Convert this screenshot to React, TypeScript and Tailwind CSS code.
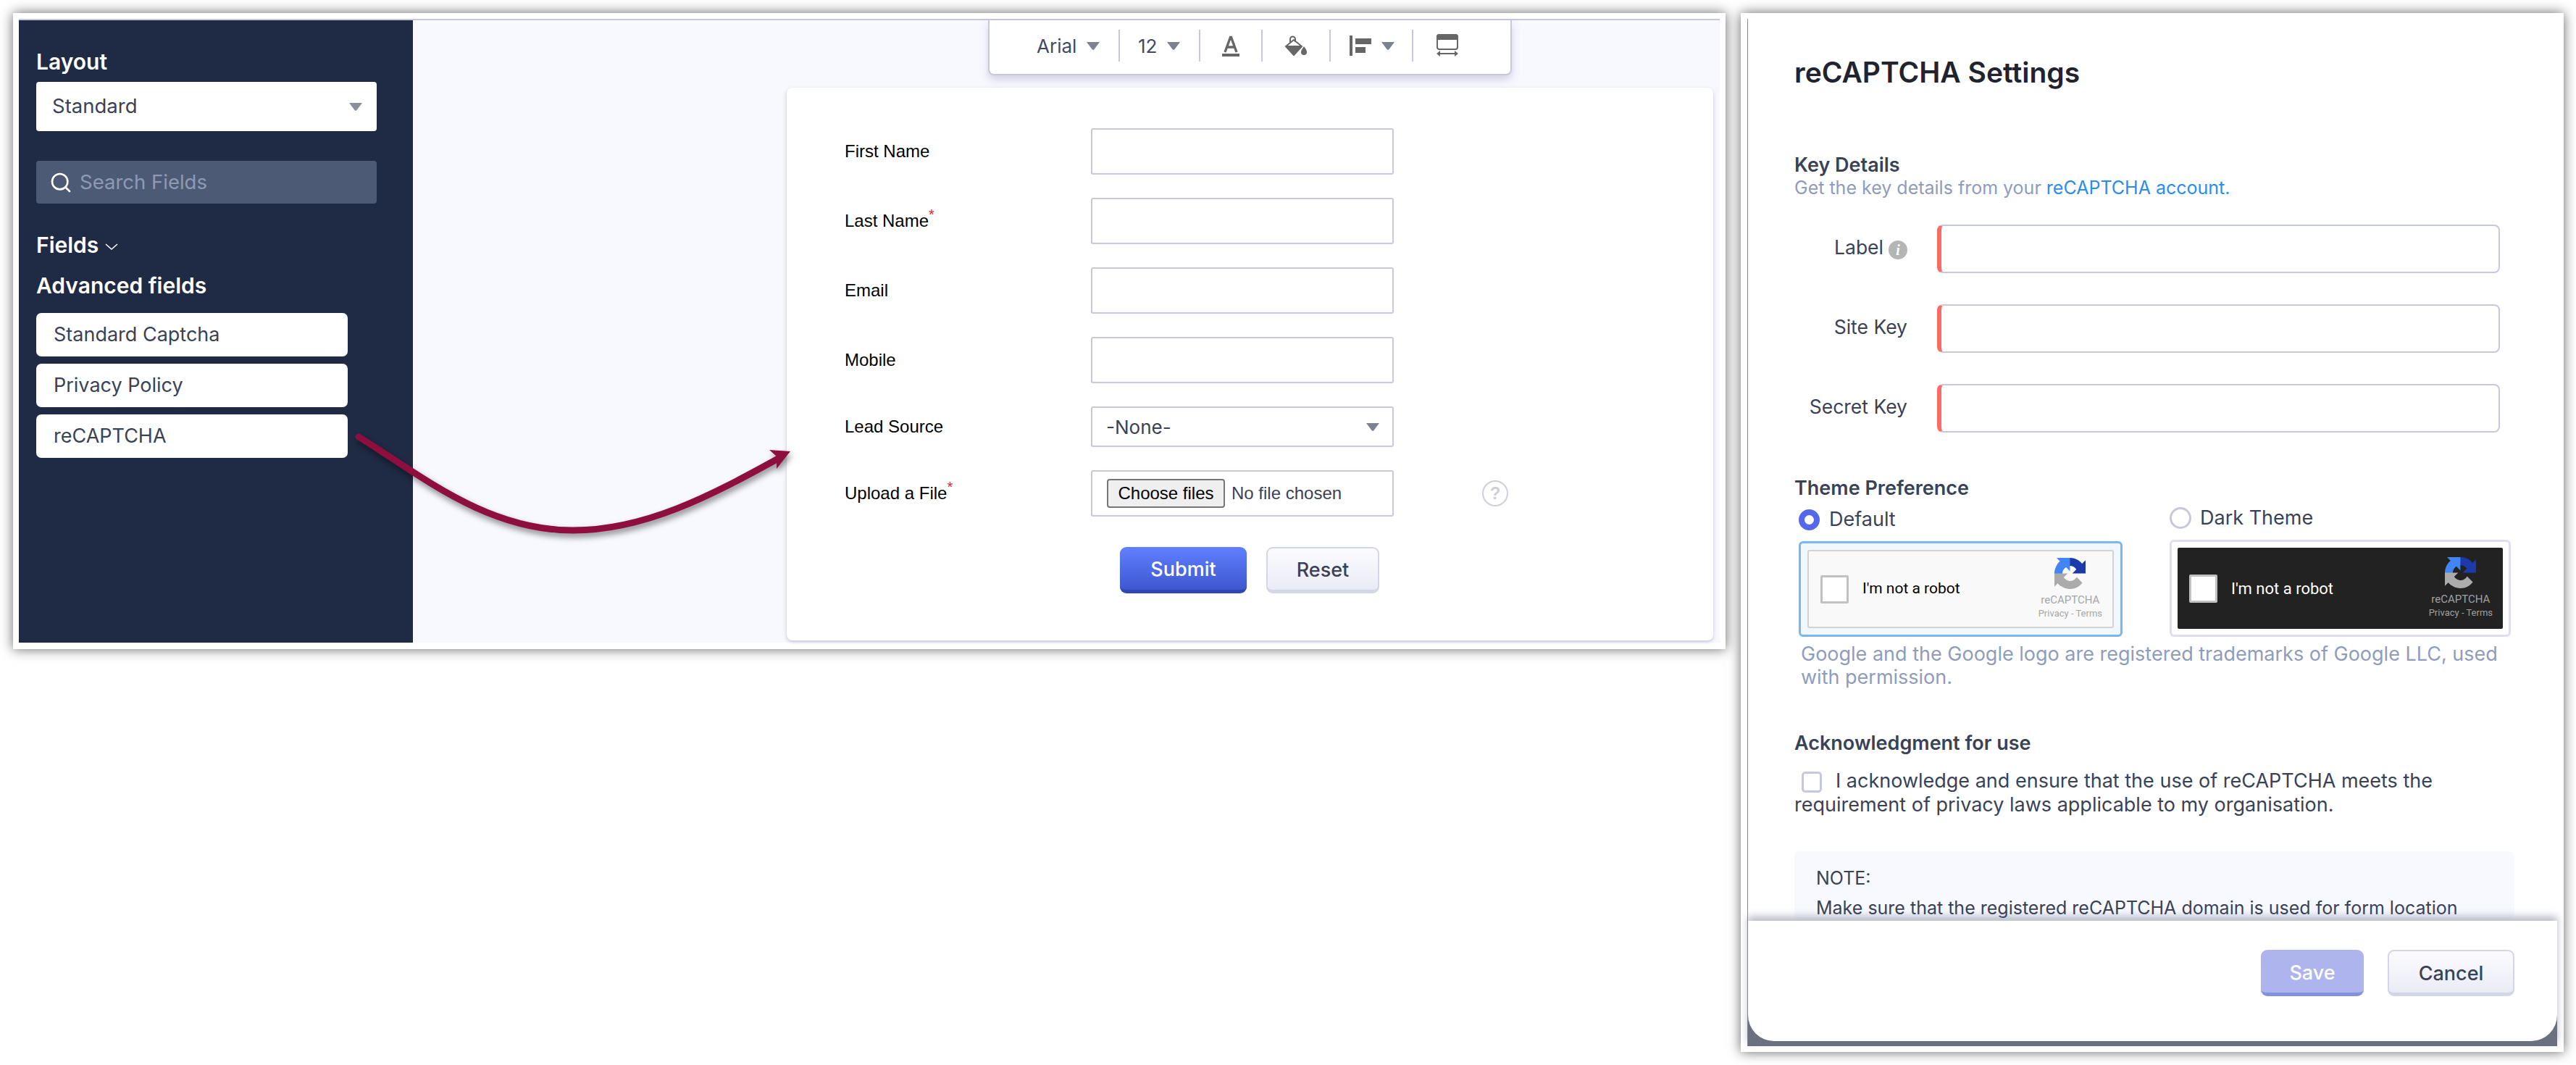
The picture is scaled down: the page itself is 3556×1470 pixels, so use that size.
import { Search } from 'lucide-react';

function Caret({ className }: { className: string }) {
  return (
    <svg viewBox="0 0 18 11" className={className}>
      <path d="M0 0h18l-7.5 10a2 2 0 0 1-3 0z" fill="currentColor" />
    </svg>
  );
}

function RecaptchaLogo({ className }: { className: string }) {
  return (
    <svg viewBox="0 0 64 64" className={className}>
      <path d="M64 31.955l-.033-1.37V4.687l-7.16 7.16C50.948 4.674 42.033.093 32.05.093c-10.4 0-19.622 4.96-25.458 12.64l11.736 11.86a15.55 15.55 0 0 1 4.754-5.334c2.05-1.6 4.952-2.906 8.968-2.906.485 0 .86.057 1.135.163 4.976.393 9.29 3.14 11.83 7.124l-8.307 8.308 32.29.004" fill="#1c3aa9" />
      <path d="M31.862.094l-1.37.033H4.594l7.16 7.16C4.58 13.147 0 22.06 0 32.046c0 10.4 4.96 19.622 12.64 25.458l11.86-11.736a15.55 15.55 0 0 1-5.334-4.754c-1.6-2.05-2.906-4.952-2.906-8.968 0-.485.057-.86.163-1.135.393-4.976 3.14-9.29 7.124-11.83l8.308 8.307.004-32.29" fill="#4285f4" />
      <path d="M.001 32.045l.033 1.37v25.898l7.16-7.16c5.86 7.173 14.774 11.754 24.76 11.754 10.4 0 19.622-4.96 25.458-12.64l-11.736-11.86a15.55 15.55 0 0 1-4.754 5.334c-2.05 1.6-4.952 2.906-8.968 2.906-.485 0-.86-.057-1.135-.163-4.976-.393-9.29-3.14-11.83-7.124l8.307-8.308-32.29-.004" fill="#ababab" />
    </svg>
  );
}

function Sidebar() {
  return (
    <aside className="w-[544px] shrink-0 bg-[#1f2b44] pl-[24px] pt-[39px] font-['Inter',sans-serif]">
      <div className="text-[30px] leading-[36px] font-semibold text-white">Layout</div>
      <div className="mt-[10px] flex h-[68px] w-[470px] items-center justify-between rounded-[4px] bg-white pl-[22px] pr-[20px] text-[27.5px] text-[#3a4256]">
        Standard
        <Caret className="w-[18px] text-[#8b8f9c]" />
      </div>
      <div className="mt-[41px] flex h-[59px] w-[470px] items-center rounded-[4px] bg-[#4d5a76] pl-[18px] text-[27.5px] text-[#8e9ab3]">
        <Search className="mr-[10px] h-[32px] w-[32px] text-white" strokeWidth={2} />
        Search Fields
      </div>
      <div className="mt-[39px] flex items-center text-[30px] leading-[36px] font-semibold text-white">
        Fields
        <svg viewBox="0 0 18 10" className="ml-[9px] mt-[6px] w-[18px] text-white">
          <path d="M1 1l8 7 8-7" fill="none" stroke="currentColor" strokeWidth="1.5" />
        </svg>
      </div>
      <div className="mt-[20px] text-[30px] leading-[36px] font-semibold text-white">Advanced fields</div>
      <div className="mt-[20px] flex flex-col gap-[10px]">
        {['Standard Captcha', 'Privacy Policy', 'reCAPTCHA'].map((name) => (
          <div key={name} className="flex h-[60px] w-[430px] items-center rounded-[7px] bg-white pl-[24px] text-[27px] text-[#3a4256]">
            {name}
          </div>
        ))}
      </div>
    </aside>
  );
}

function Toolbar() {
  return (
    <div className="flex h-[76px] w-[723px] items-center self-center rounded-b-[8px] border-x-2 border-b-2 border-[#c8c8dc] bg-white pb-[4px] font-['Inter',sans-serif] text-[26px] text-[#3f4a66] shadow-[0_6px_12px_rgba(120,120,160,0.3)]">
      <div className="flex h-[44px] w-[180px] items-center border-r-2 border-[#c8c8dc] pl-[65px]">
        Arial
        <Caret className="ml-[14px] w-[18px] text-[#7d8290]" />
      </div>
      <div className="flex h-[44px] w-[111px] items-center border-r-2 border-[#c8c8dc] pl-[25px]">
        12
        <Caret className="ml-[14px] w-[18px] text-[#7d8290]" />
      </div>
      <div className="flex h-[44px] w-[86px] items-center justify-center border-r-2 border-[#c8c8dc]">
        <svg viewBox="0 0 24 30" className="h-[30px] w-[24px]">
          <path d="M12 2L4 24M12 2l8 22M7 17h10" fill="none" stroke="#666" strokeWidth="3.4" />
          <path d="M0 26h24v4H0z" fill="#666" />
        </svg>
      </div>
      <div className="flex h-[44px] w-[94px] items-center justify-center border-r-2 border-[#c8c8dc]">
        <svg viewBox="0 0 32 28" className="h-[28px] w-[32px]">
          <path d="M13 6L2 15l11 12 11-12z" fill="none" stroke="#666" strokeWidth="2" />
          <path d="M1 14h24L13 28z" fill="#666" />
          <path d="M8 10V5a3.5 3.5 0 0 1 7 0v4" fill="none" stroke="#666" strokeWidth="2" />
          <path d="M27 15c-3 4-4 6-4 8a4 4 0 0 0 8 0c0-2-1-4-4-8z" fill="#666" />
        </svg>
      </div>
      <div className="flex h-[44px] w-[114px] items-center border-r-2 border-[#c8c8dc] pl-[26px]">
        <svg viewBox="0 0 30 28" className="h-[28px] w-[30px]">
          <path d="M0 0h4v28H0zM8 4h22v8H8zM8 16h14v8H8z" fill="#666" />
        </svg>
        <Caret className="ml-[14px] w-[18px] text-[#7d8290]" />
      </div>
      <div className="flex flex-1 items-center pl-[32px]">
        <svg viewBox="0 0 30 32" className="h-[32px] w-[30px]">
          <rect x="1" y="1" width="28" height="20" rx="3" fill="none" stroke="#666" strokeWidth="2" />
          <path d="M0 4a4 4 0 0 1 4-4h22a4 4 0 0 1 4 4v4H0z" fill="#666" />
          <path d="M4 27h22" stroke="#666" strokeWidth="2" />
          <path d="M0 27l5-4v8zM30 27l-5-4v8z" fill="#666" />
        </svg>
      </div>
    </div>
  );
}

function FormRow({ label, required, top }: { label: string; required?: boolean; top?: boolean }) {
  return (
    <div className={`flex h-[64px] items-center ${top ? '' : 'mt-[32px]'}`}>
      <label className="w-[420px] pl-[80px] font-['Liberation_Sans',sans-serif] text-[24px] text-black">
        {label}
        {required && <sup className="text-[20px] text-[#e02828]">*</sup>}
      </label>
      <input className="h-[64px] w-[418px] rounded-[3px] border-2 border-[#c8c8dc] bg-white" />
    </div>
  );
}

function FormCard() {
  return (
    <div className="mt-[17px] flex-1 rounded-[8px] bg-white pt-[56px] shadow-[0_2px_5px_rgba(150,150,190,0.55)]">
      <FormRow label="First Name" top />
      <FormRow label="Last Name" required />
      <FormRow label="Email" />
      <FormRow label="Mobile" />
      <div className="mt-[32px] flex h-[56px] items-center">
        <label className="w-[420px] pl-[80px] font-['Liberation_Sans',sans-serif] text-[24px] text-black">Lead Source</label>
        <div className="flex h-[56px] w-[418px] items-center justify-between rounded-[3px] border-2 border-[#c8c8dc] pl-[19px] pr-[18px] font-['Inter',sans-serif] text-[26px] text-[#3a4256]">
          -None-
          <Caret className="w-[18px] text-[#7d8290]" />
        </div>
      </div>
      <div className="mt-[32px] flex h-[64px] items-center">
        <label className="w-[420px] pl-[80px] font-['Liberation_Sans',sans-serif] text-[24px] text-black">
          Upload a File<sup className="text-[20px] text-[#e02828]">*</sup>
        </label>
        <div className="flex h-[64px] w-[418px] items-center rounded-[3px] border-2 border-[#c8c8dc] pl-[20px] font-['Liberation_Sans',sans-serif] text-[24px]">
          <span className="flex h-[40px] w-[163px] items-center justify-center rounded-[4px] border-2 border-[#767676] bg-[#efefef] text-black">Choose files</span>
          <span className="ml-[9px] text-[#3a4256]">No file chosen</span>
        </div>
        <span className="ml-[122px] flex h-[36px] w-[36px] items-center justify-center rounded-full border-2 border-[#cfcfdc] font-['Liberation_Sans',sans-serif] text-[24px] font-bold text-[#cfcfd6]">?</span>
      </div>
      <div className="ml-[460px] mt-[42px] flex gap-[27px] font-['Inter',sans-serif] text-[27px] font-medium">
        <button className="h-[64px] w-[175px] rounded-[9px] border-b-[5px] border-[#2f47b5] bg-gradient-to-b from-[#6180ff] to-[#3d57cf] pt-[3px] text-white">Submit</button>
        <button className="h-[64px] w-[156px] rounded-[9px] border-2 border-b-[5px] border-[#d3d6e6] bg-gradient-to-b from-[#fbfbff] to-[#ebebf6] pt-[3px] text-[#3a4256]">Reset</button>
      </div>
    </div>
  );
}

function KeyField({ label, info }: { label: string; info?: boolean }) {
  return (
    <div className="flex h-[67px] items-center">
      <div className="-mt-[4px] flex w-[156px] items-center justify-end gap-[7px] text-[26.5px] text-[#3a4256]">
        {label}
        {info && (
          <span className="mt-[6px] flex h-[26px] w-[26px] items-center justify-center rounded-full bg-[#b5b5b5] font-['Liberation_Serif',serif] text-[20px] font-bold italic text-white">i</span>
        )}
      </div>
      <input className="ml-[41px] h-[67px] w-[777px] rounded-[8px] border-2 border-l-[6px] border-[#c8c8dc] border-l-[#fd6a64]" />
    </div>
  );
}

function CaptchaPreview({ dark }: { dark?: boolean }) {
  return (
    <div className={`flex h-full items-center ${dark ? 'rounded-[2px] bg-[#222222] text-white' : 'rounded-[3px] border-2 border-[#d3d3d3] bg-[#f9f9f9] text-black'} font-['Roboto',sans-serif]`}>
      <span className="ml-[16px] h-[39px] w-[39px] shrink-0 rounded-[2px] border-[3px] border-[#c1c1c1] bg-white" />
      <span className={`ml-[19px] ${dark ? 'text-[22px]' : 'text-[21px]'}`}>I'm not a robot</span>
      <div className={`ml-auto mr-[14px] flex flex-col items-center whitespace-nowrap ${dark ? 'text-[#a0a0a0]' : 'text-[#a6a6a6]'}`}>
        <RecaptchaLogo className="h-[43px] w-[43px]" />
        <span className="mt-[5px] text-[15px] leading-[20px]">reCAPTCHA</span>
        <span className="text-[13px] leading-[18px]">Privacy - Terms</span>
      </div>
    </div>
  );
}

function SettingsBody() {
  return (
    <div className="flex-1 overflow-hidden pl-[64px] pr-[59px] pt-[50px]">
      <h1 className="text-[39px] leading-[48px] font-semibold text-[#1f2430]">reCAPTCHA Settings</h1>
      <h2 className="mt-[88px] text-[27px] leading-[32px] font-semibold text-[#3a4256]">Key Details</h2>
      <p className="text-[25px] leading-[30px] text-[#8f9cbc]">
        Get the key details from your <a className="text-[#2a8cf0]">reCAPTCHA account.</a>
      </p>
      <div className="mt-[36px] flex flex-col gap-[43px]">
        <KeyField label="Label" info />
        <KeyField label="Site Key" />
        <KeyField label="Secret Key" />
      </div>
      <h2 className="mt-[61px] text-[27px] leading-[32px] font-semibold text-[#3a4256]">Theme Preference</h2>
      <div className="flex h-[190px] pl-[6px] text-[27px] text-[#3a4256]">
        <div className="w-[512px] pt-[12px]">
          <div className="flex h-[30px] items-center gap-[13px]">
            <span className="h-[29px] w-[29px] rounded-full border-[8px] border-[#5468ee] bg-white" />
            Default
          </div>
          <div className="mt-[15px] h-[132px] w-[447px] rounded-[6px] border-[3px] border-[#7cb5f0] bg-[#f1f7fe] p-[9px]">
            <CaptchaPreview />
          </div>
        </div>
        <div className="pt-[10px]">
          <div className="flex h-[30px] items-center gap-[12px]">
            <span className="h-[30px] w-[30px] rounded-full border-[3px] border-[#c8c8dc] bg-white" />
            Dark Theme
          </div>
          <div className="mt-[15px] h-[134px] w-[471px] rounded-[6px] border-[3px] border-[#dedeee] bg-white p-[8px]">
            <CaptchaPreview dark />
          </div>
        </div>
      </div>
      <p className="mt-[7px] pl-[9px] text-[27px] leading-[32px] text-[#8f9cbc]">
        Google and the Google logo are registered trademarks of Google LLC, used with permission.
      </p>
      <h2 className="mt-[59px] text-[27px] leading-[32px] font-semibold text-[#3a4256]">Acknowledgment for use</h2>
      <p className="mt-[19px] text-[27px] leading-[33px] text-[#3a4256]">
        <span className="mb-[-7px] ml-[10px] mr-[19px] inline-block h-[29px] w-[28px] rounded-[5px] border-[3px] border-[#c8c8dc] bg-white" />
        I acknowledge and ensure that the use of reCAPTCHA meets the requirement of privacy laws applicable to my organisation.
      </p>
      <div className="mt-[48px] rounded-[8px] bg-[#f8f9ff] pl-[30px] pr-[40px] pt-[21px] text-[25px] leading-[32px] text-[#3a4256]">
        <p>NOTE:</p>
        <p className="mt-[9px]">Make sure that the registered reCAPTCHA domain is used for form location</p>
      </div>
    </div>
  );
}

function SettingsFooter() {
  return (
    <div className="relative bg-[#6b7080] pb-[7px] shadow-[0_-6px_10px_rgba(100,105,130,0.45)]">
      <div className="flex h-[166px] justify-end gap-[33px] rounded-b-[36px] bg-white pr-[59px] pt-[40px] text-[27px] font-medium">
        <button className="h-[64px] w-[142px] rounded-[9px] border-b-[5px] border-[#8392dc] bg-[#aeb4ee] pt-[5px] text-white">Save</button>
        <button className="h-[64px] w-[175px] rounded-[9px] border-2 border-b-[5px] border-[#d3d6e6] bg-gradient-to-b from-[#fbfbff] to-[#ebebf6] pt-[5px] text-[#3a4256]">Cancel</button>
      </div>
    </div>
  );
}

export default function App() {
  return (
    <div className="relative flex h-[1470px] w-[3556px] items-start gap-[21px] overflow-hidden bg-white pl-[18px] pt-[18px]">
      <section className="flex h-[878px] w-[2364px] bg-white pb-[9px] pl-[8px] pr-[8px] pt-[8px] shadow-[0_0_16px_rgba(0,0,0,0.6)]">
        <div className="flex flex-1 border-t-2 border-[#c8c8dc]">
          <Sidebar />
          <main className="flex flex-1 flex-col bg-[#f8f9ff] pb-[3px] pl-[516px] pr-[9px]">
            <Toolbar />
            <FormCard />
          </main>
        </div>
      </section>

      <section className="flex h-[1434px] w-[1136px] bg-white pb-[8px] pl-[9px] pr-[9px] pt-[8px] font-['Inter',sans-serif] shadow-[0_0_16px_rgba(0,0,0,0.6)]">
        <div className="flex flex-1 flex-col border-l border-[#8a8a8a]">
          <SettingsBody />
          <SettingsFooter />
        </div>
      </section>

      {/* arrow from the reCAPTCHA field to the form */}
      <svg viewBox="0 0 3556 1470" className="pointer-events-none absolute left-0 top-0 h-[1470px] w-[3556px] drop-shadow-[2px_5px_4px_rgba(0,0,0,0.45)]">
        <path d="M495 603C580 655 670 732 791 732C890 732 980 685 1076 632" fill="none" stroke="#8e0f3e" strokeWidth="9" strokeLinecap="round" />
        <path d="M1091 623L1062 621L1072 630L1072 647z" fill="#8e0f3e" />
      </svg>
    </div>
  );
}
